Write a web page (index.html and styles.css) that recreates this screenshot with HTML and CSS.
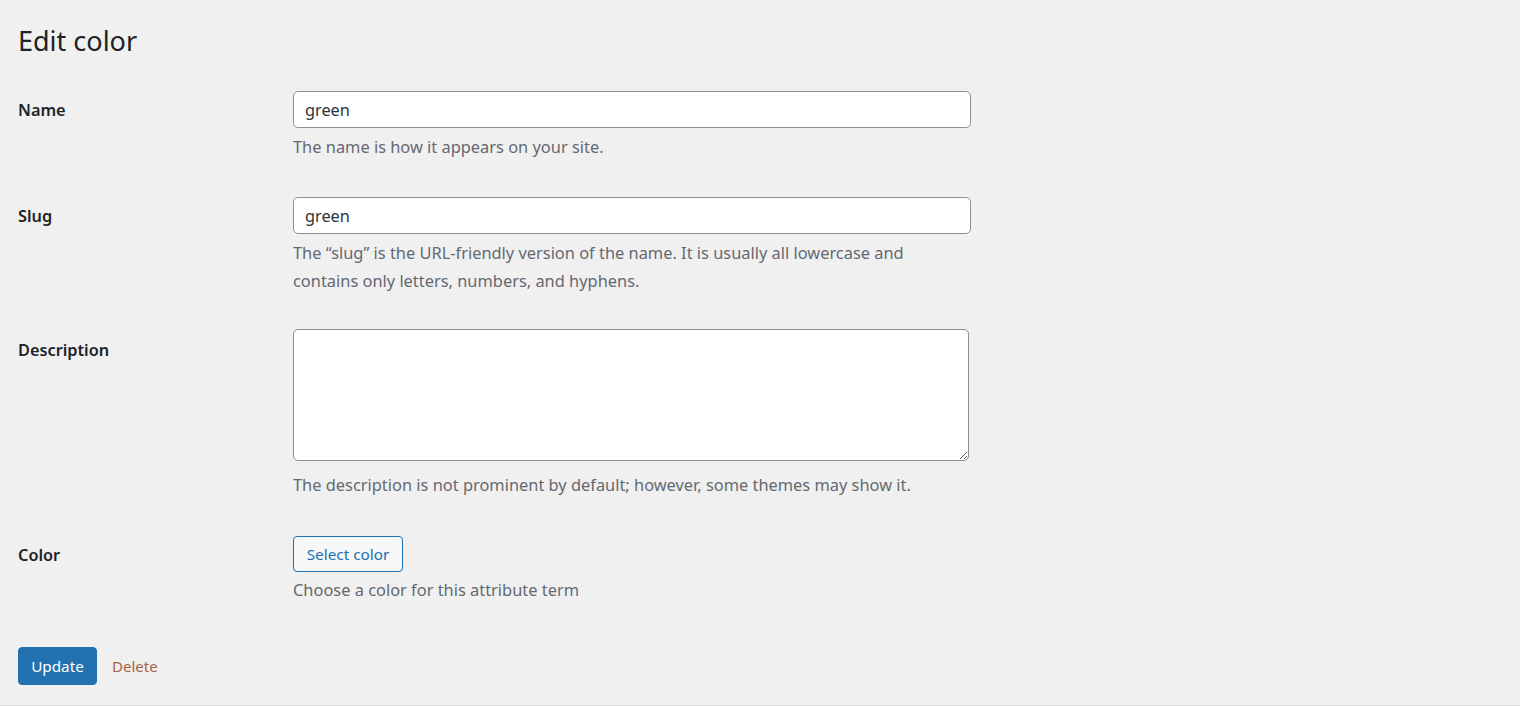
FILE: index.html
```html
<!DOCTYPE html>
<html lang="en">
<head>
<meta charset="utf-8">
<title>Edit color</title>
<link rel="stylesheet" href="styles.css">
</head>
<body>
<div class="wrap">
  <h1 class="title">Edit color</h1>
  <form class="term-form">
    <div class="row row-name">
      <label class="label" for="name">Name</label>
      <div class="field">
        <input class="text-input" id="name" type="text" value="green">
        <p class="description">The name is how it appears on your site.</p>
      </div>
    </div>
    <div class="row row-slug">
      <label class="label" for="slug">Slug</label>
      <div class="field">
        <input class="text-input" id="slug" type="text" value="green">
        <p class="description">The “slug” is the URL-friendly version of the name. It is usually all lowercase and<br>contains only letters, numbers, and hyphens.</p>
      </div>
    </div>
    <div class="row row-desc">
      <label class="label" for="desc">Description</label>
      <div class="field">
        <textarea class="textarea" id="desc"></textarea>
        <p class="description">The description is not prominent by default; however, some themes may show it.</p>
      </div>
    </div>
    <div class="row row-color">
      <label class="label">Color</label>
      <div class="field">
        <button type="button" class="btn-secondary">Select color</button>
        <p class="description">Choose a color for this attribute term</p>
      </div>
    </div>
    <div class="actions">
      <button type="button" class="btn-primary">Update</button>
      <a class="delete-link" href="#">Delete</a>
    </div>
  </form>
</div>
</body>
</html>
```
FILE: styles.css
```css
html, body {
  margin: 0;
  padding: 0;
}
body {
  background: #f0f0f1;
  font-family: "Noto Sans", "Open Sans", sans-serif;
  color: #1d2327;
  height: 706px;
  overflow: hidden;
  box-sizing: border-box;
  border-bottom: 1px solid #dcdcde;
}
.wrap {
  padding: 0 18px;
}
.title {
  margin: 0;
  padding-top: 22px;
  height: 91px;
  box-sizing: border-box;
  font-size: 27px;
  line-height: 37px;
  font-weight: 400;
  color: #1d2327;
}
.row {
  display: grid;
  grid-template-columns: 275px 678px;
}
.row-slug { margin-top: 36px; }
.row-desc { margin-top: 34px; }
.row-color { margin-top: 37px; }
.label {
  padding-top: 5px;
  font-size: 16.3px;
  line-height: 28px;
  font-weight: 600;
  color: #1d2327;
}
.row-desc .label { padding-top: 7px; }
.field {
  display: flex;
  flex-direction: column;
  align-items: flex-start;
}
.text-input {
  width: 678px;
  height: 37px;
  box-sizing: border-box;
  margin: 0;
  padding: 0 11px;
  border: 1px solid #8c8f94;
  border-radius: 5px;
  background: #fff;
  font-family: inherit;
  font-size: 16.3px;
  color: #2c3338;
  outline: none;
}
.textarea {
  width: 676px;
  height: 132px;
  box-sizing: border-box;
  margin: 0;
  border: 1px solid #8c8f94;
  border-radius: 5px;
  background: #fff;
  resize: vertical;
  font-family: inherit;
  outline: none;
}
.description {
  margin: 5px 0 0;
  font-size: 16.4px;
  line-height: 28px;
  color: #646970;
}
.row-desc .description { margin-top: 10px; }
.row-color .description { margin-top: 4px; }
.btn-secondary {
  width: 110px;
  height: 36px;
  box-sizing: border-box;
  margin: 0;
  padding: 0;
  border: 1px solid #2271b1;
  border-radius: 4px;
  background: #f6f7f7;
  color: #2271b1;
  font-family: inherit;
  font-size: 15.3px;
  cursor: pointer;
}
.actions {
  margin-top: 43px;
  display: flex;
  align-items: center;
  gap: 15px;
}
.btn-primary {
  width: 79px;
  height: 38px;
  box-sizing: border-box;
  margin: 0;
  padding: 0;
  border: 1px solid #2271b1;
  border-radius: 4px;
  background: #2271b1;
  color: #fff;
  font-family: inherit;
  font-size: 15.3px;
  cursor: pointer;
}
.delete-link {
  color: #a8613e;
  text-decoration: none;
  font-size: 15px;
  line-height: 28px;
}
```
